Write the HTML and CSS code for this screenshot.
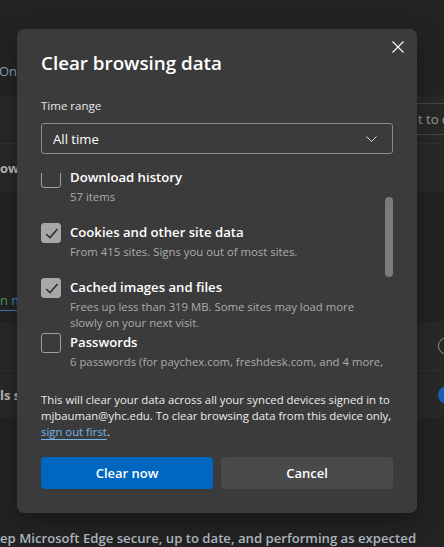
FILE: index.html
```html
<!DOCTYPE html>
<html lang="en">
<head>
<meta charset="utf-8">
<title>Clear browsing data</title>
<link rel="stylesheet" href="styles.css">
</head>
<body>
<div class="page">
  <div class="bg">
    <div class="bg-top"><span class="bg-link">Onl</span></div>
    <div class="bg-card">
      <div class="bg-row bg-row-a">
        <div class="bg-input"><span class="bg-input-text">t to c</span></div>
      </div>
      <div class="bg-row bg-row-b"><span class="bg-strong">ow</span></div>
    </div>
    <div class="bg-gap"><span class="bg-more"><span class="bg-more-n">n</span> m</span></div>
    <div class="bg-card">
      <div class="bg-row bg-row-c"><span class="bg-circle"></span></div>
      <div class="bg-row bg-row-d"><span class="bg-strong">ls s</span><span class="bg-toggle"></span></div>
    </div>
    <div class="bg-bottom"><span class="bg-keep">ep Microsoft Edge secure, up to date, and performing as expected</span></div>
  </div>

  <div class="dialog" role="dialog" aria-label="Clear browsing data">
    <button class="close" aria-label="Close">
      <svg width="12" height="12" viewBox="0 0 12 12"><path d="M0.5 0.5L11.5 11.5M11.5 0.5L0.5 11.5" stroke="#ffffff" stroke-width="1.1" fill="none"/></svg>
    </button>
    <h1 class="title">Clear browsing data</h1>
    <div class="field-label">Time range</div>
    <div class="select">
      <span class="select-value">All time</span>
      <svg class="chev" width="11" height="6" viewBox="0 0 11 6"><polyline points="0.5,0.5 5.5,5.5 10.5,0.5" stroke="#e0e0e0" stroke-width="1" fill="none"/></svg>
    </div>
    <div class="list">
      <div class="list-inner">
        <div class="item">
          <span class="cb"></span>
          <div class="item-text">
            <div class="item-label">Download history</div>
            <div class="item-sub">57 items</div>
          </div>
        </div>
        <div class="item">
          <span class="cb cb-on"><svg width="20" height="20" viewBox="0 0 20 20"><polyline points="5,11 9,14.5 16.5,6" stroke="#2f2f2f" stroke-width="1.6" fill="none"/></svg></span>
          <div class="item-text">
            <div class="item-label">Cookies and other site data</div>
            <div class="item-sub">From 415 sites. Signs you out of most sites.</div>
          </div>
        </div>
        <div class="item">
          <span class="cb cb-on"><svg width="20" height="20" viewBox="0 0 20 20"><polyline points="5,11 9,14.5 16.5,6" stroke="#2f2f2f" stroke-width="1.6" fill="none"/></svg></span>
          <div class="item-text">
            <div class="item-label">Cached images and files</div>
            <div class="item-sub">Frees up less than 319 MB. Some sites may load more<br>slowly on your next visit.</div>
          </div>
        </div>
        <div class="item">
          <span class="cb"></span>
          <div class="item-text">
            <div class="item-label">Passwords</div>
            <div class="item-sub item-sub-one">6 passwords (for paychex.com, freshdesk.com, and 4 more,</div>
          </div>
        </div>
      </div>
      <div class="scrollbar"></div>
    </div>
    <p class="note">This will clear your data across all your synced devices signed in to<br>mjbauman@yhc.edu. To clear browsing data from this device only,<br><a class="link" href="#">sign out first</a>.</p>
    <div class="actions">
      <button class="btn btn-primary">Clear now</button>
      <button class="btn btn-secondary">Cancel</button>
    </div>
  </div>
</div>
</body>
</html>
```

FILE: styles.css
```css
* { box-sizing: border-box; }
html, body { margin: 0; padding: 0; }
body {
  width: 444px;
  height: 547px;
  overflow: hidden;
  background: #232323;
  font-family: "Open Sans", "Noto Sans", sans-serif;
}
.page { position: relative; width: 444px; height: 547px; overflow: hidden; background: #232323; }

/* dimmed settings page behind the dialog */
.bg { display: flex; flex-direction: column; }
.bg-top { height: 95px; padding-top: 62px; }
.bg-link { display: block; font-size: 13px; line-height: 18px; color: #8ea5ba; margin-left: -1px; }
.bg-card { background: #282828; }
.bg-row { display: flex; align-items: center; }
.bg-row-a { height: 49px; border-bottom: 1px solid #313131; align-items: flex-start; justify-content: flex-end; }
.bg-row-b { height: 48px; }
.bg-row-c { height: 49px; border-bottom: 1px solid #313131; justify-content: flex-end; }
.bg-row-d { height: 47px; justify-content: space-between; }
.bg-input { margin-top: 8px; width: 160px; height: 32px; margin-right: -20px; border: 1px solid #474747; border-radius: 4px; display: flex; align-items: center; overflow: hidden; }
.bg-input-text { padding-left: 113px; font-size: 13px; color: #9c9c9c; white-space: nowrap; }
.bg-strong { font-size: 13px; font-weight: 700; color: #b9b9b9; white-space: nowrap; }
.bg-gap { height: 130px; padding-top: 96px; }
.bg-more { display: inline-block; font-size: 13px; line-height: 19px; color: #3d8ad0; border-bottom: 1px solid #3a7bb8; }
.bg-more-n { color: #4f9a5c; }
.bg-circle { width: 18px; height: 18px; border: 1.5px solid #8f8f8f; border-radius: 50%; margin-right: -12px; }
.bg-toggle { width: 40px; height: 18px; border-radius: 9px; background: #1463b4; margin-right: -34px; }
.bg-bottom { height: 129px; padding-top: 110px; }
.bg-keep { display: block; font-size: 13.15px; line-height: 20px; font-weight: 600; color: #b1b8c0; white-space: nowrap; }

/* dialog */
.dialog {
  position: absolute;
  left: 17px;
  top: 29px;
  width: 400px;
  height: 484px;
  background: #3b3b3b;
  border-radius: 7px;
  padding: 20px 24px 24px;
  box-shadow: 0 8px 24px rgba(0,0,0,0.35);
  display: flex;
  flex-direction: column;
  color: #ffffff;
}
.close {
  position: absolute;
  top: 12px;
  right: 13px;
  width: 12px;
  height: 12px;
  padding: 0;
  border: 0;
  background: none;
  display: flex;
}
.title { margin: 0; font-size: 18.8px; line-height: 29px; font-weight: 600; color: #ffffff; }
.field-label { margin-top: 18px; font-size: 11.5px; line-height: 20px; color: #e8e8e8; }
.select {
  margin-top: 7px;
  height: 31px;
  border: 1px solid #8a8a8a;
  border-radius: 3px;
  padding: 0 15px 0 11px;
  display: flex;
  align-items: center;
  justify-content: space-between;
}
.select-value { font-size: 13.15px; line-height: 28px; color: #ffffff; }
.chev { display: block; }
.list { position: relative; margin-top: 19px; height: 197px; overflow: hidden; }
.list-inner { margin-top: -5px; }
.item { height: 55px; display: flex; align-items: flex-start; gap: 9px; }
.cb { flex: none; width: 20px; height: 20px; border: 1px solid #a0a0a0; border-radius: 3px; }
.cb-on { background: #a7a7a7; border-color: #a7a7a7; }
.cb svg { display: block; margin: -1px; }
.item-text { flex: 1; min-width: 0; }
.item-label { font-size: 13.15px; line-height: 19px; font-weight: 600; color: #ffffff; }
.item-sub { margin-top: 1.5px; font-size: 11.35px; line-height: 16px; color: #ababab; }
.item-sub-one { white-space: nowrap; }
.scrollbar { position: absolute; right: 0; top: 24px; width: 8px; height: 80px; border-radius: 4px; background: #7b7b7b; }
.note { margin: 21.5px 0 0; font-size: 11.35px; line-height: 16px; color: #ececec; white-space: nowrap; }
.link { color: #73b5ea; text-decoration: underline; text-underline-offset: 3px; }
.actions { margin-top: 17.5px; display: grid; grid-template-columns: 1fr 1fr; gap: 8px; }
.btn { height: 32px; border: 0; border-radius: 4px; font-family: inherit; font-size: 13px; font-weight: 600; line-height: 32px; color: #ffffff; padding: 0; }
.btn-primary { background: #0067c0; }
.btn-secondary { background: #4a4a4a; }
```
